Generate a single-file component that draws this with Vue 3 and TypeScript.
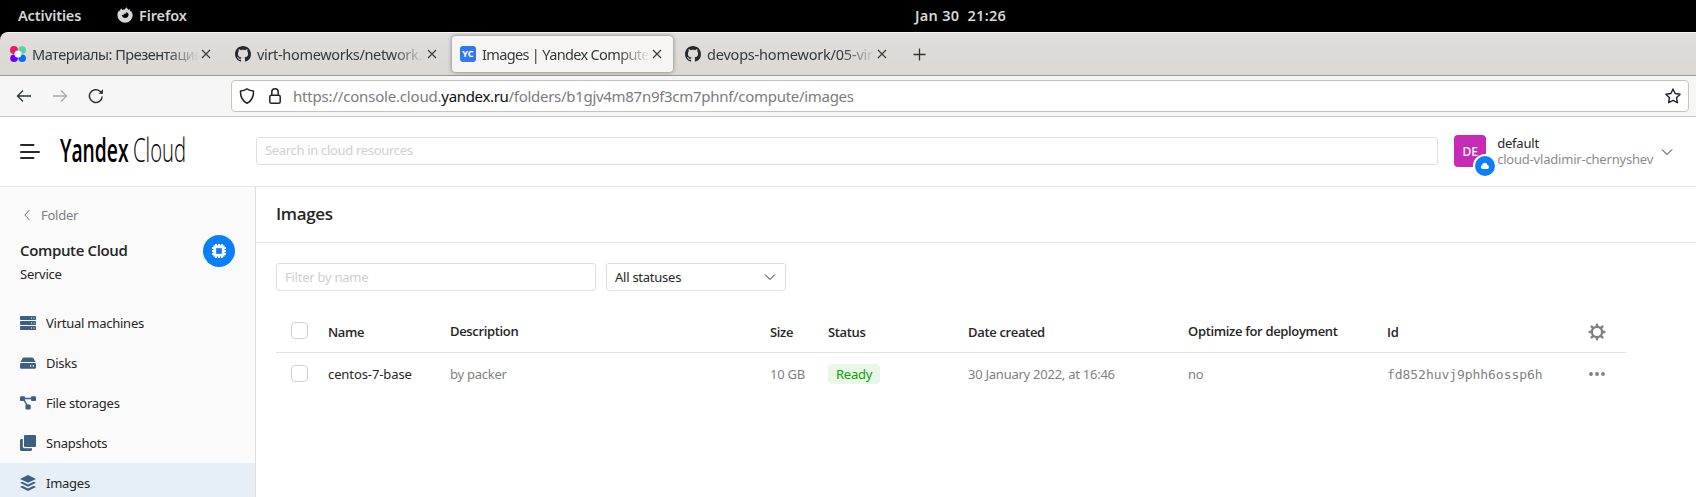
<script setup lang="ts">
interface Tab { title: string; icon: 'dots' | 'github' | 'yc'; cls: string; active?: boolean }
interface NavItem { label: string; icon: string; active?: boolean }
interface Column { key: string; label: string; raised?: boolean }

const tabs: Tab[] = [
  { title: 'Материалы: Презентация', icon: 'dots', cls: 'tab-materials' },
  { title: 'virt-homeworks/network.t', icon: 'github', cls: 'tab-virt' },
  { title: 'Images | Yandex Compute', icon: 'yc', cls: 'tab-images', active: true },
  { title: 'devops-homework/05-virt', icon: 'github', cls: 'tab-devops' },
]
const nav: NavItem[] = [
  { label: 'Virtual machines', icon: 'vm' },
  { label: 'Disks', icon: 'disk' },
  { label: 'File storages', icon: 'files' },
  { label: 'Snapshots', icon: 'snap' },
  { label: 'Images', icon: 'images', active: true },
]
const columns: Column[] = [
  { key: 'name', label: 'Name' },
  { key: 'description', label: 'Description', raised: true },
  { key: 'size', label: 'Size' },
  { key: 'status', label: 'Status' },
  { key: 'created', label: 'Date created' },
  { key: 'optimize', label: 'Optimize for deployment', raised: true },
  { key: 'id', label: 'Id' },
]
const row: Record<string, string> = {
  name: 'centos-7-base',
  description: 'by packer',
  size: '10 GB',
  status: 'Ready',
  created: '30 January 2022, at 16:46',
  optimize: 'no',
  id: 'fd852huvj9phh6ossp6h',
}
</script>

<template>
  <div class="screen">
    <div class="shell">
      <span class="activities">Activities</span>
      <svg class="fox" width="16" height="16" viewBox="0 0 16 16">
        <path fill="#d6d6d6" fill-rule="evenodd" d="M4.2 1.2 5.3 3c1-.5 1.700-.6 2.500-.5C8.200 1.500 8.900.8 10 .2c0 1.200.6 1.900 1.600 2.700l.6-.8c.7 1 1 1.700 1.100 2.400l.8-.5c1 1.500 1.600 3.100 1.600 4.500A7.600 7.600 0 0 1 8 15.700 7.600 7.600 0 0 1 .4 8.200C.4 5.900 1.300 4.300 2.400 3.300l.3 1.100C3 3.100 3.500 2.100 4.200 1.200ZM8.600 4.900C9.600 5.500 9.700 6.300 8.700 6.500L7 6.700c-.6.200-.4.800-.1 1.300-.9.500-1.700.300-2.300-.2.300 2 1.700 3.200 3.500 3.200 2 0 3.500-1.400 3.500-3.200 0-1.500-1.200-2.600-3-2.900Z" />
      </svg>
      <span class="app-name">Firefox</span>
      <span class="clock">Jan 30&nbsp; 21:26</span>
    </div>

    <div class="tabstrip-wrap">
      <div class="tabstrip">
        <div v-for="t in tabs" :key="t.title" class="tab" :class="[t.cls, { active: t.active }]">
          <svg v-if="t.icon === 'dots'" class="fav" width="16" height="16" viewBox="0 0 16 16">
            <circle cx="4" cy="4" r="4" fill="#ed1966" /><circle cx="12.200" cy="4" r="3.800" fill="#4fd6a3" />
            <circle cx="4" cy="12.200" r="3.800" fill="#6a00ff" /><circle cx="12.200" cy="12.200" r="3.800" fill="#0a6cff" />
            <circle cx="8" cy="8" r="3.500" fill="#fff" />
          </svg>
          <svg v-else-if="t.icon === 'github'" class="fav" width="16" height="16" viewBox="0 0 16 16">
            <path fill="#24292f" d="M8 0C3.580 0 0 3.580 0 8c0 3.540 2.290 6.530 5.470 7.590.4.070.550-.170.550-.380 0-.190-.010-.820-.010-1.490-2.010.370-2.530-.490-2.690-.940-.090-.230-.480-.940-.820-1.130-.280-.150-.680-.520-.010-.530.630-.010 1.080.580 1.230.820.720 1.210 1.870.870 2.330.660.070-.520.280-.870.510-1.070-1.780-.200-3.640-.890-3.640-3.950 0-.870.310-1.590.820-2.150-.080-.200-.360-1.020.080-2.120 0 0 .670-.210 2.200.820.640-.180 1.320-.270 2-.270s1.360.090 2 .270c1.530-1.040 2.200-.820 2.200-.820.440 1.100.160 1.920.080 2.120.510.560.820 1.270.820 2.150 0 3.070-1.870 3.750-3.650 3.950.290.250.540.730.540 1.480 0 1.070-.010 1.930-.010 2.200 0 .210.150.460.550.380A8.010 8.010 0 0 0 16 8c0-4.420-3.580-8-8-8Z" />
          </svg>
          <span v-else class="fav yc">YC</span>
          <span class="tab-title">{{ t.title }}</span>
          <svg class="close" width="10" height="10" viewBox="0 0 10 10"><path d="m1 1 8 8M9 1 1 9" stroke="#3a3e40" stroke-width="1.200" /></svg>
        </div>
        <svg class="plus" width="13" height="13" viewBox="0 0 13 13"><path d="M6.500.5v12M.5 6.500h12" stroke="#2e3436" stroke-width="1.300" /></svg>
      </div>
    </div>

    <div class="toolbar">
      <svg class="nav-btn" width="16" height="16" viewBox="0 0 16 16" fill="none" stroke="#2e3436" stroke-width="1.300"><path d="M15 8H1.500M7 2.500 1.500 8 7 13.500" /></svg>
      <svg class="nav-btn" width="16" height="16" viewBox="0 0 16 16" fill="none" stroke="#aaa" stroke-width="1.300"><path d="M1 8h13.500M9 2.500 14.500 8 9 13.500" /></svg>
      <svg class="nav-btn" width="16" height="16" viewBox="0 0 16 16" fill="none" stroke="#2e3436" stroke-width="1.500"><path d="M14.200 8.500a6.400 6.400 0 1 1-2.200-5.300l2 2" /><path d="M15 1.200v4.600h-4.600Z" fill="#2e3436" stroke="none" /></svg>
      <div class="urlbar">
        <svg width="16" height="16" viewBox="0 0 16 16" fill="none" stroke="#222" stroke-width="1.500" stroke-linejoin="round"><path d="M8 .9C6.200 2.200 3.900 2.900 1.500 3c-.2 5 1.300 9.700 6.500 12.200C13.200 12.700 14.700 8 14.500 3 12.100 2.900 9.800 2.200 8 .9Z" /></svg>
        <svg class="lock" width="14" height="16" viewBox="0 0 14 16" fill="none" stroke="#222" stroke-width="1.500"><rect x="1.800" y="7.200" width="10.400" height="8" rx="1.500" /><path d="M3.800 7V4a3.200 3.200 0 0 1 6.400 0v3" /></svg>
        <span class="url"><span class="u1">https://console.cloud.</span><span class="u2">yandex.ru</span><span class="u3">/folders/b1gjv4m87n9f3cm7phnf/compute/images</span></span>
        <svg class="star" width="16" height="16" viewBox="0 0 16 16" fill="none" stroke="#222" stroke-width="1.400" stroke-linejoin="round"><path d="m8 1 2.100 4.500 5 .7-3.600 3.500.9 5L8 12.300l-4.400 2.400.9-5L.9 6.200l5-.7Z" /></svg>
      </div>
    </div>

    <header class="header">
      <svg class="burger" width="20" height="16" viewBox="0 0 20 16" stroke="#262626" stroke-width="2" stroke-linecap="round"><path d="M1 2h12.500M1 9h18M1 15h12.500" /></svg>
      <svg class="logo" width="128" height="36" viewBox="0 0 128 36">
        <text class="logo-bold" y="30" x="0" textLength="68.500" lengthAdjust="spacingAndGlyphs">Yandex</text>
        <text class="logo-light" y="30" x="73" textLength="53" lengthAdjust="spacingAndGlyphs">Cloud</text>
      </svg>
      <div class="search">Search in cloud resources</div>
      <div class="avatar">DE
        <span class="badge"><svg width="10" height="8" viewBox="0 0 10 8"><path fill="#fff" d="M2.600 7A2 2 0 0 1 2 3.200 2.800 2.800 0 0 1 7.500 3 2.100 2.100 0 0 1 7.600 7Z" /></svg></span>
      </div>
      <div class="account"><span>default</span><span class="org">cloud-vladimir-chernyshev</span></div>
      <svg class="chev" width="12" height="8" viewBox="0 0 12 8" fill="none" stroke="#262626"><path d="m1 1.500 5 5 5-5" /></svg>
    </header>

    <div class="body">
      <aside class="sidebar">
        <div class="back">
          <svg width="6" height="12" viewBox="0 0 6 12" fill="none" stroke="#777"><path d="M5.500 1 .8 6l4.700 5" /></svg>
          <span>Folder</span>
        </div>
        <div class="service">
          <div class="service-text"><span class="service-name">Compute Cloud</span><span class="service-kind">Service</span></div>
          <span class="chip">
            <svg width="14" height="14" viewBox="0 0 14 14"><path stroke="#fff" stroke-width="2" d="M4 0v14M7 0v3M7 11v3M10 0v14M0 4h14M0 7h3M11 7h3M0 10h14" /><rect x="2.800" y="2.800" width="8.400" height="8.400" fill="#0a80f8" stroke="#fff" stroke-width="2.700" /></svg>
          </span>
        </div>
        <nav>
          <div v-for="n in nav" :key="n.label" class="item" :class="{ current: n.active }">
            <svg width="16" height="16" viewBox="0 0 16 16" fill="#3b6083">
              <template v-if="n.icon === 'vm'">
                <rect y="1" width="16" height="4" rx=".8" /><rect y="6" width="16" height="4" rx=".8" /><rect y="11" width="16" height="4" rx=".8" />
                <path fill="#fff" d="M11 2.500h1v1h-1zM13.500 2.500h1v1h-1zM11 7.500h1v1h-1zM13.500 7.500h1v1h-1zM11 12.500h1v1h-1zM13.500 12.500h1v1h-1z" />
              </template>
              <template v-else-if="n.icon === 'disk'">
                <path d="M3.800 2.500h8.400c.5 0 .8.200 1.100.6L15.500 7H.5l2.200-3.900c.3-.4.600-.6 1.100-.6Z" /><rect y="8" width="16" height="5.700" rx="1.300" />
                <path fill="#fff" d="M10 10.200h1.300v1.300H10zM12.700 10.200H14v1.300h-1.300z" />
              </template>
              <template v-else-if="n.icon === 'files'">
                <rect y="1.200" width="5" height="4.800" rx="1" /><rect x="11" y="1.200" width="5" height="4.800" rx="1" /><rect x="5.500" y="9.500" width="5.200" height="5" rx="1" />
                <path d="M4 3.500h8M3.500 4l3.700 6.500" stroke="#3b6083" stroke-width="1.500" />
              </template>
              <template v-else-if="n.icon === 'snap'">
                <rect x="4" width="12" height="12" rx="1.300" /><path d="M2.800 4v7.500c0 1 .700 1.700 1.700 1.700H12v1.300c0 .9-.6 1.500-1.500 1.500h-9C.6 16 0 15.400 0 14.500v-9C0 4.600.6 4 1.500 4Z" />
              </template>
              <template v-else>
                <path d="m8 0 8 3.900-8 3.900-8-3.900ZM0 7.700l2.300-1L8 9.500l5.700-2.800 2.300 1-8 4ZM0 11.900l2.300-1.100L8 13.600l5.700-2.800 2.300 1.100-8 4Z" />
              </template>
            </svg>
            <span>{{ n.label }}</span>
          </div>
        </nav>
      </aside>

      <main class="main">
        <h1 class="title">Images</h1>
        <div class="filters">
          <div class="filter">Filter by name</div>
          <div class="select"><span>All statuses</span><svg width="12" height="8" viewBox="0 0 12 8" fill="none" stroke="#262626"><path d="m1 1.500 5 5 5-5" /></svg></div>
        </div>
        <div class="table">
          <div class="tr head">
            <span class="check"></span>
            <span v-for="c in columns" :key="c.key" :class="['th', 'h-' + c.key, { raised: c.raised }]">{{ c.label }}</span>
            <svg class="gear" width="18" height="18" viewBox="0 0 18 18" fill="none" stroke="#7f7f7f"><circle cx="9" cy="9" r="5.100" stroke-width="2.300" /><path stroke-width="2.500" stroke-linecap="round" d="M9 1.700v1.500M9 14.800v1.500M1.700 9h1.500M14.800 9h1.500M3.700 3.700l1.200 1.200M13.100 13.100l1.200 1.200M3.700 14.300l1.200-1.200M13.100 4.900l1.200-1.200" /></svg>
          </div>
          <div class="tr data">
            <span class="check"></span>
            <span v-for="c in columns" :key="c.key" :class="['td', 'c-' + c.key]"><span>{{ row[c.key] }}</span></span>
            <svg class="dots" width="16" height="4" viewBox="0 0 16 4" fill="#7f7f7f"><circle cx="2" cy="2" r="1.900" /><circle cx="8" cy="2" r="1.900" /><circle cx="14" cy="2" r="1.900" /></svg>
          </div>
        </div>
      </main>
    </div>
  </div>
</template>

<style>
body { margin: 0; overflow: hidden; }
</style>

<style scoped>
* { box-sizing: border-box; }
.screen { width: 1696px; height: 497px; overflow: hidden; display: flex; flex-direction: column; background: #fff; font-family: "Noto Sans", "Open Sans", sans-serif; font-size: 13px; color: #262626; letter-spacing: -.25px; white-space: nowrap; }
svg { display: block; flex: none; }

.shell { height: 32px; flex: none; background: #000; color: #d6d6d6; display: flex; align-items: center; font-size: 14.500px; font-weight: 600; padding: 0 0 2px 18px; }
.activities { width: 99px; letter-spacing: -.15px; }
.app-name { margin-left: 6px; width: 776px; letter-spacing: -.1px; }
.clock { letter-spacing: .3px; }

.tabstrip-wrap { height: 44px; flex: none; background: #000; }
.tabstrip { height: 44px; display: flex; align-items: flex-start; background: linear-gradient(#e1dedb, #dbd7d3); border-top: 1px solid #f7f6f5; border-bottom: 1px solid #9d9892; border-radius: 8px 0 0 0; padding-top: 3px; }
.tab { width: 221px; height: 36px; margin-right: 4px; display: flex; align-items: center; padding: 0 11px 0 8px; font-size: 14.500px; color: #34393b; border-radius: 4px; }
.tab:first-child { width: 222px; padding-left: 10px; margin-right: 5px; }
.tab.active { background: #f6f5f4; box-shadow: 0 0 4px rgba(0, 0, 0, .45); }
.tab-materials { letter-spacing: -.5px; }
.tab-virt { letter-spacing: -.33px; }
.tab-images { letter-spacing: -.65px; }
.tab-devops { letter-spacing: -.2px; }
.fav { flex: none; width: 16px; height: 16px; }
.yc { border-radius: 3px; background: #3478f0; color: #fff; font-size: 9px; line-height: 16px; font-weight: 700; text-align: center; letter-spacing: .2px; }
.tab-title { flex: 1; min-width: 0; overflow: hidden; margin-left: 6px; line-height: 22px; -webkit-mask-image: linear-gradient(to left, transparent, #000 32px); mask-image: linear-gradient(to left, transparent, #000 32px); }
.close { margin-left: 2px; }
.plus { margin: 12px 0 0 11px; }

.toolbar { height: 41px; flex: none; display: flex; align-items: center; background: #f6f6f6; border-bottom: 1px solid #ccc5bf; padding: 0 7px 0 16px; }
.nav-btn { margin-right: 20px; }
.urlbar { margin-left: 107px; flex: 1; height: 32px; display: flex; align-items: center; background: #fff; border: 1px solid #c8c2bb; border-radius: 4px; padding: 0 7px 0 7px; }
.lock { margin-left: 13px; }
.url { flex: 1; margin-left: 11px; font-size: 15px; color: #7b7b7b; line-height: 24px; }
.u1 { letter-spacing: -.19px; }
.u2 { color: #0c0c0d; letter-spacing: -.33px; }
.u3 { letter-spacing: -.29px; }

.header { height: 70px; flex: none; display: flex; align-items: center; border-bottom: 1px solid #e3e3e3; padding: 0 23px 0 20px; }
.burger { margin-top: -1px; }
.logo { margin-left: 20px; margin-top: -3px; overflow: visible; }
.logo-bold { font: 600 33px "Open Sans", "Noto Sans", sans-serif; letter-spacing: 0; }
.logo-light { font: 300 33px "Open Sans", "Noto Sans", sans-serif; letter-spacing: 0; }
.search { margin-left: 68px; width: 1183px; height: 28px; border: 1px solid #e0e0e0; border-radius: 3px; padding-left: 8px; line-height: 25px; color: #cfcfcf; letter-spacing: -.32px; margin-top: -1px; }
.avatar { position: relative; margin-left: 16px; margin-top: -1px; width: 32px; height: 32px; border-radius: 4px; background: #c72bb5; color: #fff; font-weight: 500; font-size: 12px; line-height: 33px; text-align: center; letter-spacing: 0; }
.badge { position: absolute; left: 19px; top: 19px; width: 24px; height: 24px; border: 2px solid #fff; border-radius: 50%; background: #0a80f8; display: flex; align-items: center; justify-content: center; }
.account { margin-left: 11px; margin-top: -2px; width: 164px; display: flex; flex-direction: column; line-height: 16px; letter-spacing: -.2px; }
.org { color: #8c8c8c; }

.body { flex: 1; display: flex; min-height: 0; }
.sidebar { width: 256px; flex: none; background: #fafafa; border-right: 1px solid #dedede; }
.back { display: flex; align-items: center; height: 20px; margin-top: 18px; padding-left: 24px; gap: 11px; color: #7f7f7f; }
.service { display: flex; justify-content: space-between; padding: 10px 20px 0; height: 78px; }
.service-text { display: flex; flex-direction: column; }
.service-name { font: 600 15px/30px "Open Sans", "Noto Sans", sans-serif; letter-spacing: -.35px; }
.service-kind { line-height: 19px; }
.chip { width: 32px; height: 32px; border-radius: 50%; background: #0a80f8; display: flex; align-items: center; justify-content: center; }
.item { height: 40px; padding-left: 20px; display: flex; align-items: center; gap: 10px; }
.item.current { background: #e6eef8; }

.main { flex: 1; min-width: 0; }
.title { margin: 0; height: 56px; border-bottom: 1px solid #e3e3e3; padding-left: 20px; font: 600 17px/53px "Open Sans", "Noto Sans", sans-serif; letter-spacing: -.35px; }
.filters { display: flex; gap: 10px; padding: 20px 0 0 20px; }
.filter, .select { height: 28px; border: 1px solid #e0e0e0; border-radius: 3px; line-height: 26px; padding: 0 9px 0 8px; }
.filter { width: 320px; color: #cfcfcf; }
.select { width: 180px; display: flex; align-items: center; justify-content: space-between; }
.table { margin-left: 20px; width: 1350px; }
.tr { display: grid; grid-template-columns: 52px 122px 320px 58px 140px 220px 199px 201px 18px; align-items: center; }
.head { height: 62px; border-bottom: 1px solid #e3e3e3; padding-top: 20px; font-family: "Open Sans", "Noto Sans", sans-serif; font-weight: 600; letter-spacing: -.34px; }
.raised { transform: translateY(-1px); }
.data { height: 42px; color: #7f7f7f; }
.check { width: 17px; height: 17px; border: 1px solid #d2d2d2; border-radius: 4px; background: #fff; margin-left: 15px; margin-top: -2px; }
.data .check { margin-top: -1px; }
.c-name { color: #262626; letter-spacing: -.1px; }
.c-status span { display: inline-block; height: 20px; line-height: 20px; border-radius: 4px; background: #e8f7e7; color: #0fa008; padding: 0 8px; }
.c-id { font-family: "DejaVu Sans Mono", monospace; letter-spacing: -.05px; }
.dots { margin-left: 1px; margin-top: -1px; }
</style>
